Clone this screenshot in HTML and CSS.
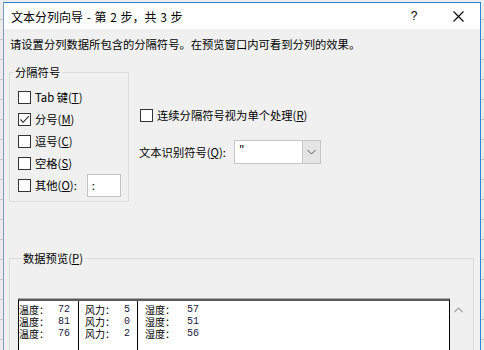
FILE: index.html
```html
<!DOCTYPE html>
<html lang="zh-CN">
<head>
<meta charset="utf-8">
<title>文本分列向导</title>
<link rel="stylesheet" href="styles.css">
</head>
<body>
<div class="dialog">
  <div class="titlebar">
    <span class="title">文本分列向导 - 第 2 步，共 3 步</span>
    <span class="tb-btn help">?</span>
    <span class="tb-btn close">
      <svg width="11" height="11" viewBox="0 0 11 11"><path d="M0.5 0.5 L10.5 10.5 M10.5 0.5 L0.5 10.5" stroke="#000" stroke-width="1.1" fill="none"/></svg>
    </span>
  </div>
  <div class="body">
    <div class="intro">请设置分列数据所包含的分隔符号。在预览窗口内可看到分列的效果。</div>
    <div class="options">
      <fieldset class="group delims">
        <legend>分隔符号</legend>
        <div class="row"><span class="cb"></span><span>Tab 键(<u>T</u>)</span></div>
        <div class="row"><span class="cb"><svg width="11" height="11" viewBox="0 0 11 11"><path d="M1.5 5.5 L4.2 8.3 L9.8 2.2" stroke="#222" stroke-width="1.1" fill="none"/></svg></span><span>分号(<u>M</u>)</span></div>
        <div class="row"><span class="cb"></span><span>逗号(<u>C</u>)</span></div>
        <div class="row"><span class="cb"></span><span>空格(<u>S</u>)</span></div>
        <div class="row"><span class="cb"></span><span>其他(<u>O</u>):</span><span class="other">:</span></div>
      </fieldset>
      <div class="right">
        <div class="row"><span class="cb"></span><span>连续分隔符号视为单个处理(<u>R</u>)</span></div>
        <div class="qualifier">
          <span>文本识别符号(<u>Q</u>):</span>
          <span class="combo">
            <span class="combo-val">"</span>
            <span class="combo-btn"><svg width="9" height="6" viewBox="0 0 9 6"><path d="M0.5 1 L4.5 5 L8.5 1" stroke="#555" stroke-width="1" fill="none"/></svg></span>
          </span>
        </div>
      </div>
    </div>
    <fieldset class="group preview">
      <legend>数据预览(<u>P</u>)</legend>
      <div class="preview-wrap">
        <div class="grid">
          <div class="col c1">
            <div class="cell"><span class="lab">温度：</span><span class="val">72</span></div>
            <div class="cell"><span class="lab">温度：</span><span class="val">81</span></div>
            <div class="cell"><span class="lab">温度：</span><span class="val">76</span></div>
          </div>
          <div class="col c2">
            <div class="cell"><span class="lab">风力：</span><span class="val">5</span></div>
            <div class="cell"><span class="lab">风力：</span><span class="val">0</span></div>
            <div class="cell"><span class="lab">风力：</span><span class="val">2</span></div>
          </div>
          <div class="col c3">
            <div class="cell"><span class="lab">湿度：</span><span class="val">57</span></div>
            <div class="cell"><span class="lab">湿度：</span><span class="val">51</span></div>
            <div class="cell"><span class="lab">湿度：</span><span class="val">56</span></div>
          </div>
        </div>
        <div class="scroll">
          <svg width="9" height="6" viewBox="0 0 9 6"><path d="M0.5 5 L4.5 1 L8.5 5" stroke="#a6a6a6" stroke-width="1.2" fill="none"/></svg>
        </div>
      </div>
    </fieldset>
  </div>
</div>
</body>
</html>
```

FILE: styles.css
```css
html, body {
  margin: 0;
  padding: 0;
  height: 100%;
  overflow: hidden;
}
body {
  background-color: #ececec;
  background-image: repeating-linear-gradient(to bottom, transparent 0, transparent 19px, #c8c8c8 19px, #c8c8c8 20px);
  font-family: "Noto Sans CJK SC", "Noto Sans", sans-serif;
  font-size: 11.3px;
  color: #000;
}
.dialog {
  margin: 2px 0 0 3px;
  width: 478px;
  height: 360px;
  box-sizing: border-box;
  border: 1px solid #2b87d6;
  border-left-color: #7f9db9;
  border-bottom: none;
  background: #f0f0f0;
}
.titlebar {
  height: 26px;
  background: #fff;
  display: flex;
  align-items: center;
  padding-left: 7px;
}
.title {
  flex: 1;
  font-size: 12px;
  word-spacing: 1px;
}
.tb-btn {
  width: 44px;
  height: 26px;
  display: flex;
  align-items: center;
  justify-content: center;
}
.help {
  font-family: "Liberation Sans", sans-serif;
  font-size: 12px;
}
.body {
  padding: 0 0 0 5px;
}
.intro {
  margin-top: 7px;
  line-height: 16px;
  padding-left: 1px;
}
.options {
  display: flex;
  margin-top: 13px;
}
.group {
  margin: 0;
  padding: 0;
  border: 1px solid #dcdcdc;
  min-width: 0;
}
.group legend {
  padding: 0 2px;
  margin-left: 3px;
  line-height: 14px;
}
.delims {
  width: 120px;
  height: 137px;
  box-sizing: border-box;
  padding-top: 7px;
}
.row {
  display: flex;
  align-items: center;
  height: 22px;
}
.delims .row {
  padding-left: 8px;
}
.cb {
  width: 13px;
  height: 13px;
  box-sizing: border-box;
  border: 1px solid #333;
  background: #fff;
  margin-right: 4px;
  display: flex;
  align-items: center;
  justify-content: center;
  flex: none;
}
.other {
  margin-left: 10px;
  width: 34px;
  height: 23px;
  box-sizing: border-box;
  border: 1px solid #c4c4c4;
  background: #fff;
  padding-left: 4px;
  line-height: 20px;
  flex: none;
}
.right {
  margin-left: 10px;
  padding-top: 39px;
}
.right .row {
  padding-left: 1px;
}
.qualifier {
  display: flex;
  align-items: center;
  margin-top: 14px;
}
.combo {
  margin-left: 8px;
  width: 87px;
  height: 24px;
  box-sizing: border-box;
  border: 1px solid #c6c6c6;
  background: #fff;
  display: flex;
}
.combo-val {
  flex: 1;
  padding-left: 4px;
  line-height: 18px;
}
.combo-btn {
  width: 17px;
  background: #e5e5e5;
  border-left: 1px solid #c6c6c6;
  display: flex;
  align-items: center;
  justify-content: center;
}
.preview {
  margin-top: 49px;
  width: 465px;
  height: 120px;
  box-sizing: border-box;
  padding: 34px 0 0 8px;
}
.preview-wrap {
  display: flex;
}
.grid {
  width: 432px;
  height: 72px;
  box-sizing: border-box;
  background: #fff;
  border: 1px solid #000;
  border-top: 2px solid #5a5a5a;
  box-shadow: 0 -1px 0 #a8a8a8;
  display: flex;
}
.col {
  padding-top: 3px;
  box-sizing: border-box;
}
.c1 {
  width: 60px;
  border-right: 1px solid #000;
  padding-left: 0;
}
.c2 {
  width: 59px;
  border-right: 1px solid #000;
  padding-left: 6px;
}
.c3 {
  flex: 1;
  padding-left: 7px;
}
.cell {
  display: flex;
  align-items: center;
  height: 12px;
  line-height: 12px;
  font-size: 10px;
}
.lab {
  width: 31px;
  flex: none;
}
.val {
  font-family: "Liberation Mono", monospace;
  font-size: 10px;
  color: #1a1a40;
  margin-left: 8px;
}
.c3 .val {
  margin-left: 11px;
}
.scroll {
  width: 17px;
  display: flex;
  justify-content: center;
  padding-top: 8px;
}
.scroll svg {
  display: block;
}
```
